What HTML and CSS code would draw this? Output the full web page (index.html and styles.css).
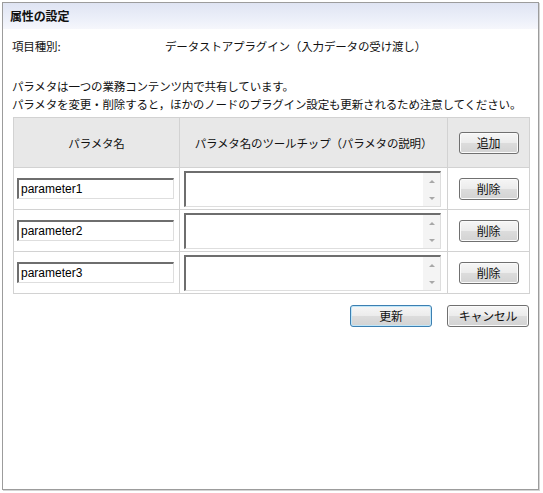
FILE: index.html
```html
<!DOCTYPE html>
<html lang="ja">
<head>
<meta charset="utf-8">
<title>属性の設定</title>
<link rel="stylesheet" href="styles.css">
</head>
<body>
<div class="frame">
  <div class="titlebar">属性の設定</div>
  <div class="item-row">
    <span class="item-label">項目種別:</span>
    <span class="item-value">データストアプラグイン（入力データの受け渡し）</span>
  </div>
  <div class="notes">
    <p class="note">パラメタは一つの業務コンテンツ内で共有しています。</p>
    <p class="note">パラメタを変更・削除すると，ほかのノードのプラグイン設定も更新されるため注意してください。</p>
  </div>
  <table class="params">
    <colgroup>
      <col class="c1"><col class="c2"><col class="c3">
    </colgroup>
    <thead>
      <tr class="head">
        <th>パラメタ名</th>
        <th>パラメタ名のツールチップ（パラメタの説明）</th>
        <th><button class="btn">追加</button></th>
      </tr>
    </thead>
    <tbody>
      <tr class="row">
        <td class="cell-name"><input class="name" type="text" value="parameter1"></td>
        <td class="cell-tip"><div class="ta"><textarea class="ta-field"></textarea><div class="sb"><span class="up"></span><span class="dn"></span></div></div></td>
        <td class="cell-btn"><button class="btn">削除</button></td>
      </tr>
      <tr class="row">
        <td class="cell-name"><input class="name" type="text" value="parameter2"></td>
        <td class="cell-tip"><div class="ta"><textarea class="ta-field"></textarea><div class="sb"><span class="up"></span><span class="dn"></span></div></div></td>
        <td class="cell-btn"><button class="btn">削除</button></td>
      </tr>
      <tr class="row">
        <td class="cell-name"><input class="name" type="text" value="parameter3"></td>
        <td class="cell-tip"><div class="ta"><textarea class="ta-field"></textarea><div class="sb"><span class="up"></span><span class="dn"></span></div></div></td>
        <td class="cell-btn"><button class="btn">削除</button></td>
      </tr>
    </tbody>
  </table>
  <div class="actions">
    <button class="btn wide primary">更新</button>
    <button class="btn wide">キャンセル</button>
  </div>
</div>
</body>
</html>
```

FILE: styles.css
```css
html, body {
  margin: 0;
  padding: 0;
  background: #ffffff;
}
body {
  font-family: "Noto Sans CJK JP", "Liberation Sans", sans-serif;
  font-size: 11.5px;
  letter-spacing: -0.15px;
  color: #111;
}
.frame {
  margin: 2px 4px 3px 2px;
  height: 486px;
  border: 1px solid #9c9c9c;
  box-shadow: 1px 1px 0 #d4d4d4;
  background: #fff;
}
.titlebar {
  height: 26px;
  line-height: 25px;
  padding-left: 7px;
  font-weight: bold;
  font-size: 12px;
  color: #111;
  background: linear-gradient(#dfe4f3, #eef1fa 70%, #f6f7fc);
}
.item-row {
  display: flex;
  margin-top: 8px;
  padding-left: 9px;
  line-height: 18px;
}
.item-label {
  width: 153px;
}
.notes {
  margin-top: 22px;
  padding-left: 9px;
}
.note {
  margin: 0;
  line-height: 18px;
}
.params {
  margin: 4px 0 0 10px;
  width: 516px;
  table-layout: fixed;
  border-collapse: collapse;
  border: 1px solid #cbcbcb;
}
.c1 { width: 166px; }
.c2 { width: 268px; }
.c3 { width: 82px; }
.params th, .params td {
  border: 1px solid #d2d2d2;
  padding: 0;
  vertical-align: middle;
}
.head {
  height: 50px;
}
.head th {
  background: #e8e8e8;
  font-weight: normal;
  text-align: center;
}
.row {
  height: 42px;
}
.cell-name {
  padding-left: 3px !important;
}
.cell-tip {
  padding-left: 4px !important;
}
.cell-btn, .head th:last-child {
  text-align: center;
}
.name {
  box-sizing: border-box;
  width: 157px;
  height: 21px;
  margin: 0;
  padding: 0 2px;
  border-top: 2px solid #6e6e6e;
  border-left: 2px solid #6e6e6e;
  border-right: 1px solid #dedede;
  border-bottom: 1px solid #dedede;
  font-family: "Liberation Sans", Arial, sans-serif;
  font-size: 12px;
  letter-spacing: 0;
  color: #000;
  outline: none;
}
.ta {
  display: flex;
  box-sizing: border-box;
  width: 257px;
  height: 36px;
  border-top: 2px solid #6e6e6e;
  border-left: 2px solid #6e6e6e;
  border-right: 1px solid #dedede;
  border-bottom: 1px solid #dedede;
  background: #fff;
}
.ta-field {
  flex: 1;
  border: 0;
  margin: 0;
  padding: 0;
  resize: none;
  overflow: hidden;
  outline: none;
  background: #fff;
}
.sb {
  width: 17px;
  background: #f4f4f4;
  display: flex;
  flex-direction: column;
  justify-content: space-between;
  align-items: center;
  padding: 7px 0 6px;
}
.up {
  width: 0;
  height: 0;
  border-left: 3px solid transparent;
  border-right: 3px solid transparent;
  border-bottom: 3px solid #a8a8a8;
}
.dn {
  width: 0;
  height: 0;
  border-left: 3px solid transparent;
  border-right: 3px solid transparent;
  border-top: 3px solid #a8a8a8;
}
.btn {
  box-sizing: border-box;
  width: 60px;
  height: 22px;
  margin: 0;
  padding: 0;
  border: 1px solid #707070;
  border-radius: 3px;
  background: linear-gradient(#f6f6f6, #ececec 48%, #dcdcdc 52%, #d3d3d3);
  box-shadow: inset 0 0 0 1px #fbfbfb;
  font-family: "Noto Sans CJK JP", sans-serif;
  font-size: 12px;
  letter-spacing: -0.3px;
  color: #111;
  line-height: 18px;
}
.actions {
  display: flex;
  justify-content: flex-end;
  gap: 15px;
  margin-top: 11px;
  padding-right: 9px;
}
.wide {
  width: 82px;
}
.primary {
  border-color: #3c7fb1;
  box-shadow: inset 0 0 0 1px #bfe6f9;
}
```
